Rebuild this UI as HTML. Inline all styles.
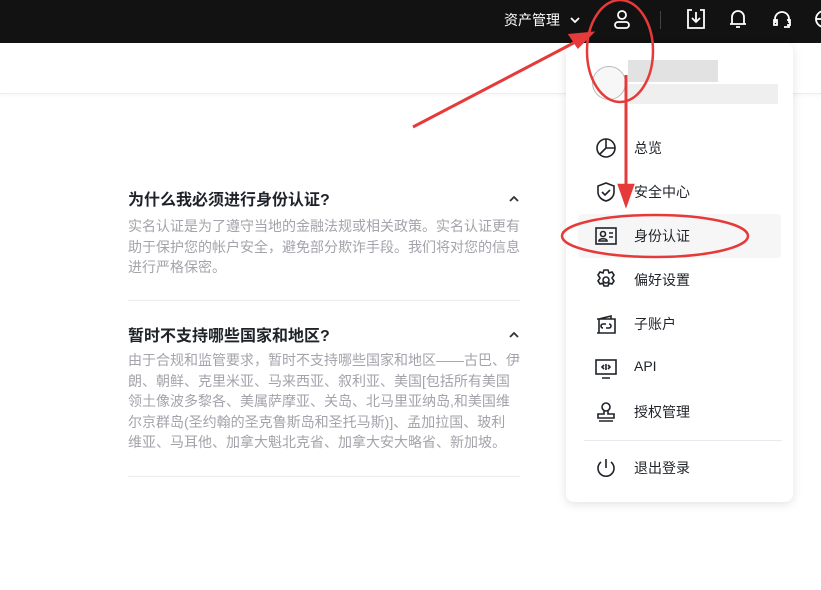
<!DOCTYPE html><html><head><meta charset="utf-8"><style>
body{margin:0;width:821px;height:590px;overflow:hidden;background:#fff;font-family:"Liberation Sans","Noto Sans CJK SC",sans-serif;position:relative}
.hd{position:absolute;left:0;top:0;width:821px;height:43px;background:#121212}
.band{position:absolute;left:0;top:43px;width:821px;height:50px;background:#fff;border-bottom:1px solid #eee;box-shadow:0 2px 4px rgba(0,0,0,.03)}
.ab{position:absolute;color:#fff;font-size:14px}
.t{position:absolute;left:128px;font-size:16px;font-weight:bold;color:#1f2329}
.p{position:absolute;left:128px;width:393px;font-size:14px;line-height:20.5px;color:#a3a3ab}
.hr{position:absolute;left:128px;width:392px;height:1px;background:#ececec}
.it{position:absolute;left:634px;font-size:14px;color:#1f2329}
svg.i{position:absolute;left:594px;width:24px;height:24px;fill:none;stroke:#1f2329;stroke-width:1.6}
</style></head><body>
<div class="hd"></div>
<div class="ab" style="left:504px;top:10px">资产管理</div>
<svg style="position:absolute;left:568px;top:13px" width="14" height="14" fill="none" stroke="#fff" stroke-width="1.8"><path d="M3 5l4 4 4-4"/></svg>
<svg style="position:absolute;left:610px;top:7px" width="24" height="24" fill="none" stroke="#fff" stroke-width="1.8"><circle cx="12" cy="8" r="4"/><rect x="5" y="15" width="14" height="6" rx="3"/></svg>
<div style="position:absolute;left:660px;top:11px;width:1px;height:18px;background:#444"></div>
<svg style="position:absolute;left:684px;top:7px" width="24" height="24" fill="none" stroke="#fff" stroke-width="1.8"><path d="M8 3H4v18h16V3h-4M12 5v10M8 11l4 4 4-4"/></svg>
<svg style="position:absolute;left:726px;top:7px" width="24" height="24" fill="none" stroke="#fff" stroke-width="1.8"><path d="M6 17V10a6 6 0 0112 0v7zM4 17h16M10 20h4"/></svg>
<svg style="position:absolute;left:770px;top:7px" width="24" height="24" fill="none" stroke="#fff" stroke-width="1.8"><path d="M5 16v-4a7 7 0 0114 0v4M4 13h3v5H4zM17 13h3v5h-3M19 18v2h-5"/></svg>
<svg style="position:absolute;left:812px;top:7px" width="24" height="24" fill="none" stroke="#fff" stroke-width="1.8"><circle cx="12" cy="12" r="8"/><path d="M4 12h16"/></svg>
<div class="band"></div>

<div class="t" style="top:186px">为什么我必须进行身份认证?</div>
<svg style="position:absolute;left:508px;top:194px" width="12" height="10" fill="none" stroke="#333" stroke-width="1.8"><path d="M2 7l4-4 4 4"/></svg>
<div class="p" style="top:216px">实名认证是为了遵守当地的金融法规或相关政策。实名认证更有助于保护您的帐户安全，避免部分欺诈手段。我们将对您的信息进行严格保密。</div>
<div class="hr" style="top:300px"></div>
<div class="t" style="top:322px">暂时不支持哪些国家和地区?</div>
<svg style="position:absolute;left:508px;top:330px" width="12" height="10" fill="none" stroke="#333" stroke-width="1.8"><path d="M2 7l4-4 4 4"/></svg>
<div class="p" style="top:350px">由于合规和监管要求，暂时不支持哪些国家和地区——古巴、伊朗、朝鲜、克里米亚、马来西亚、叙利亚、美国[包括所有美国领土像波多黎各、美属萨摩亚、关岛、北马里亚纳岛,和美国维尔京群岛(圣约翰的圣克鲁斯岛和圣托马斯)]、孟加拉国、玻利<br>维亚、马耳他、加拿大魁北克省、加拿大安大略省、新加坡。</div>
<div class="hr" style="top:476px"></div>

<div style="position:absolute;left:566px;top:43px;width:227px;height:459px;background:#fff;border-radius:8px;box-shadow:0 2px 10px rgba(0,0,0,.12)"></div>
<div style="position:absolute;left:592px;top:66px;width:32px;height:32px;border-radius:50%;border:1px solid #bbb;background:#f7f7f7"></div>
<div style="position:absolute;left:628px;top:60px;width:90px;height:22px;background:#e2e2e2"></div>
<div style="position:absolute;left:628px;top:84px;width:150px;height:20px;background:#efefef"></div>
<div style="position:absolute;left:578px;top:214px;width:203px;height:44px;background:#f6f6f7;border-radius:4px"></div>

<svg class="i" style="top:136px" viewBox="0 0 24 24"><circle cx="12" cy="12" r="9"/><path d="M12 3v9h9M12 12l-6 6"/></svg><div class="it" style="top:138px">总览</div>
<svg class="i" style="top:180px" viewBox="0 0 24 24"><path d="M12 3l8 3v6c0 5-4 8-8 9-4-1-8-4-8-9V6z"/><path d="M8 12l3 3 5-5"/></svg><div class="it" style="top:182px">安全中心</div>
<svg class="i" style="top:224px" viewBox="0 0 24 24"><rect x="2" y="4" width="20" height="16"/><circle cx="9" cy="10" r="2.5"/><path d="M5 17c0-3 8-3 8 0zM15 9h4M15 13h4"/></svg><div class="it" style="top:226px">身份认证</div>
<svg class="i" style="top:268px" viewBox="0 0 24 24"><circle cx="12" cy="12" r="3"/><path d="M10 2h4l1 3 3-1 2 3-2 3 2 3-2 3-3-1-1 3h-4l-1-3-3 1-2-3 2-3-2-3 2-3 3 1z"/></svg><div class="it" style="top:270px">偏好设置</div>
<svg class="i" style="top:312px" viewBox="0 0 24 24"><path d="M5 21V7l12-3v3M3 7h18v14H3"/><path d="M9 16a2 2 0 010-4h3M15 12a2 2 0 010 4h-3"/></svg><div class="it" style="top:314px">子账户</div>
<svg class="i" style="top:356px" viewBox="0 0 24 24"><rect x="2" y="4" width="20" height="14"/><path d="M8 22h8M10 9l-2 2 2 2M14 9l2 2-2 2M12 8v6"/></svg><div class="it" style="top:358px">API</div>
<svg class="i" style="top:400px" viewBox="0 0 24 24"><circle cx="12" cy="7" r="4"/><path d="M10 11v3H4v4h16v-4h-6v-3M5 21h14"/></svg><div class="it" style="top:402px">授权管理</div>
<div style="position:absolute;left:584px;top:440px;width:198px;height:1px;background:#e8e8ee"></div>
<svg class="i" style="top:456px" viewBox="0 0 24 24"><path d="M12 3v9M7 6a8 8 0 1010 0"/></svg><div class="it" style="top:458px">退出登录</div>

<svg style="position:absolute;left:0;top:0" width="821" height="590" fill="none" stroke="#e63a3a" stroke-width="2.5">
<ellipse cx="620" cy="51" rx="33" ry="51"/>
<ellipse cx="655" cy="236" rx="93" ry="21"/>
<path d="M413 127L585 37" stroke-width="3"/>
<path d="M592 33l-22 2 8 12z" fill="#e63a3a"/>
<path d="M626 75v115" stroke-width="3"/>
<path d="M619 185h14l-7 20z" fill="#e63a3a"/>
</svg>
</body></html>
